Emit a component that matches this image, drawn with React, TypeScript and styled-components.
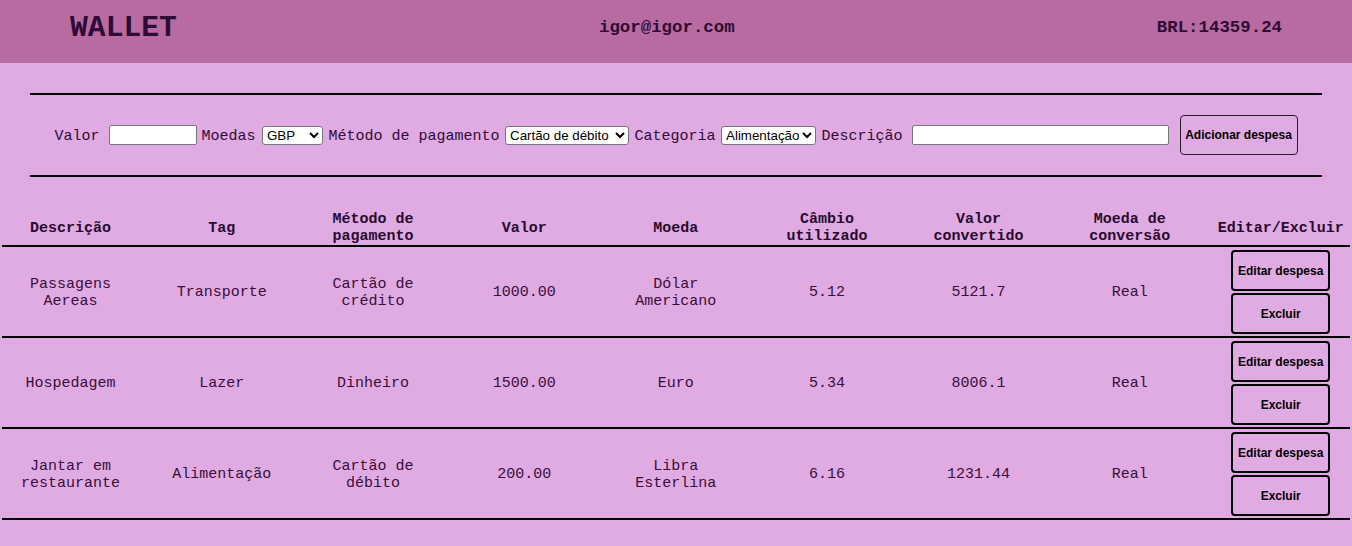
import React from "react";
import styled, { createGlobalStyle } from "styled-components";

const GlobalStyle = createGlobalStyle`
  html, body {
    margin: 0;
    padding: 0;
    background: #e0abe3;
    font-family: "Liberation Mono", "Courier New", monospace;
    color: #330a36;
  }
`;

const Header = styled.header`
  height: 63px;
  box-sizing: border-box;
  background: #b76ba0;
  display: flex;
  justify-content: space-between;
  align-items: flex-start;
  padding: 0 70px;
`;

const Logo = styled.h1`
  margin: 11px 0 0;
  font-family: "Liberation Mono", "Courier New", monospace;
  font-size: 29.7px;
  font-weight: 700;
  color: #2e0b36;
  line-height: normal;
`;

const HeaderInfo = styled.span`
  margin-top: 17.5px;
  font-size: 17.4px;
  font-weight: 700;
  color: #2e0b36;
  line-height: normal;
`;

const Rule = styled.hr<{ $top: number }>`
  margin: ${(p) => p.$top}px 30px 0;
  border: 0;
  border-top: 2px solid #000;
  height: 0;
`;

const Form = styled.form`
  display: flex;
  justify-content: center;
  align-items: center;
  padding: 20px 0;
`;

const FieldLabel = styled.span<{ $ml?: number }>`
  margin-left: ${(p) => p.$ml ?? 0}px;
  padding-top: 2px;
  font-size: 15px;
  white-space: nowrap;
  color: #330a36;
`;

const TextInput = styled.input<{ $w: number; $ml: number }>`
  box-sizing: border-box;
  width: ${(p) => p.$w}px;
  height: 20px;
  margin: 0 0 0 ${(p) => p.$ml}px;
  border: 1px solid #767676;
  border-radius: 2px;
  background: #fff;
  padding: 1px 2px;
  font-family: "Liberation Sans", Arial, sans-serif;
  font-size: 13.33px;
`;

const Select = styled.select<{ $w: number; $ml: number }>`
  box-sizing: border-box;
  width: ${(p) => p.$w}px;
  height: 19px;
  margin: 0 0 0 ${(p) => p.$ml}px;
  font-family: "Liberation Sans", Arial, sans-serif;
  font-size: 13.33px;
  color: #000;
  background: #fff;
  border: 1px solid #767676;
  border-radius: 3px;
`;

const AddButton = styled.button`
  box-sizing: border-box;
  width: 118px;
  height: 40px;
  margin-left: 10.5px;
  border: 1px solid #2a1a2a;
  border-radius: 4px;
  background: transparent;
  font-family: "Liberation Sans", Arial, sans-serif;
  font-size: 12px;
  font-weight: 700;
  color: #000;
  padding: 0;
`;

const Table = styled.table`
  margin: 32px 0 0 2px;
  width: 1348px;
  table-layout: fixed;
  border-collapse: collapse;
  font-size: 15px;
  line-height: 17px;
`;

const Row = styled.tr`
  border-bottom: 2px solid #000;
`;

const HeadCell = styled.th<{ $pl: number; $pr: number; $nowrap?: boolean }>`
  padding: 2px ${(p) => p.$pr}px 0 ${(p) => p.$pl}px;
  font-weight: 700;
  text-align: center;
  vertical-align: middle;
  color: #2a0a2e;
  white-space: ${(p) => (p.$nowrap ? "nowrap" : "normal")};
`;

const Cell = styled.td<{ $pl: number; $pr: number }>`
  padding: 2px ${(p) => p.$pr}px 0 ${(p) => p.$pl}px;
  height: 87px;
  text-align: center;
  vertical-align: middle;
  color: #3a0d3a;
`;

const ActionCell = styled.td`
  padding: 3px 6px 2px 12px;
  box-sizing: border-box;
`;

const Actions = styled.div`
  display: flex;
  flex-direction: column;
  align-items: center;
  gap: 2px;
`;

const ActionButton = styled.button`
  box-sizing: border-box;
  width: 99px;
  height: 41px;
  margin: 0;
  padding: 0;
  border: 2px solid #000;
  border-radius: 4px;
  background: transparent;
  font-family: "Liberation Sans", Arial, sans-serif;
  font-size: 12px;
  font-weight: 700;
  color: #000;
`;

const cols = [144, 151.35, 151.35, 151.35, 151.35, 151.35, 151.35, 151.35, 144.55];
const pads: [number, number][] = [
  [3, 10],
  [10, 10],
  [10, 10],
  [10, 10],
  [10, 10],
  [10, 10],
  [10, 10],
  [10, 10],
  [12, 6],
];

const headers = [
  "Descrição",
  "Tag",
  "Método de pagamento",
  "Valor",
  "Moeda",
  "Câmbio utilizado",
  "Valor convertido",
  "Moeda de conversão",
  "Editar/Excluir",
];

const expenses = [
  ["Passagens Aereas", "Transporte", "Cartão de crédito", "1000.00", "Dólar Americano", "5.12", "5121.7", "Real"],
  ["Hospedagem", "Lazer", "Dinheiro", "1500.00", "Euro", "5.34", "8006.1", "Real"],
  ["Jantar em restaurante", "Alimentação", "Cartão de débito", "200.00", "Libra Esterlina", "6.16", "1231.44", "Real"],
];

export default function App() {
  return (
    <>
      <GlobalStyle />
      <Header>
        <Logo>WALLET</Logo>
        <HeaderInfo>igor@igor.com</HeaderInfo>
        <HeaderInfo>BRL:14359.24</HeaderInfo>
      </Header>
      <Rule $top={30} />
      <Form onSubmit={(e) => e.preventDefault()}>
        <FieldLabel>Valor</FieldLabel>
        <TextInput type="text" $w={88} $ml={10} />
        <FieldLabel $ml={4}>Moedas</FieldLabel>
        <Select $w={61} $ml={6.5} defaultValue="GBP">
          <option>USD</option>
          <option>EUR</option>
          <option>GBP</option>
        </Select>
        <FieldLabel $ml={5.5}>Método de pagamento</FieldLabel>
        <Select $w={124} $ml={5.5} defaultValue="Cartão de débito">
          <option>Dinheiro</option>
          <option>Cartão de crédito</option>
          <option>Cartão de débito</option>
        </Select>
        <FieldLabel $ml={5.5}>Categoria</FieldLabel>
        <Select $w={95} $ml={5.5} defaultValue="Alimentação">
          <option>Alimentação</option>
          <option>Lazer</option>
          <option>Trabalho</option>
          <option>Transporte</option>
          <option>Saúde</option>
        </Select>
        <FieldLabel $ml={5.5}>Descrição</FieldLabel>
        <TextInput type="text" $w={257} $ml={9.5} />
        <AddButton type="submit">Adicionar despesa</AddButton>
      </Form>
      <Rule $top={0} />
      <Table>
        <colgroup>
          {cols.map((w, i) => (
            <col key={i} style={{ width: w }} />
          ))}
        </colgroup>
        <thead>
          <Row>
            {headers.map((h, i) => (
              <HeadCell key={h} $pl={pads[i][0]} $pr={pads[i][1]} $nowrap={i === 8}>
                {h}
              </HeadCell>
            ))}
          </Row>
        </thead>
        <tbody>
          {expenses.map((row) => (
            <Row key={row[0]}>
              {row.map((v, i) => (
                <Cell key={i} $pl={pads[i][0]} $pr={pads[i][1]}>
                  {v}
                </Cell>
              ))}
              <ActionCell>
                <Actions>
                  <ActionButton type="button">Editar despesa</ActionButton>
                  <ActionButton type="button">Excluir</ActionButton>
                </Actions>
              </ActionCell>
            </Row>
          ))}
        </tbody>
      </Table>
    </>
  );
}
